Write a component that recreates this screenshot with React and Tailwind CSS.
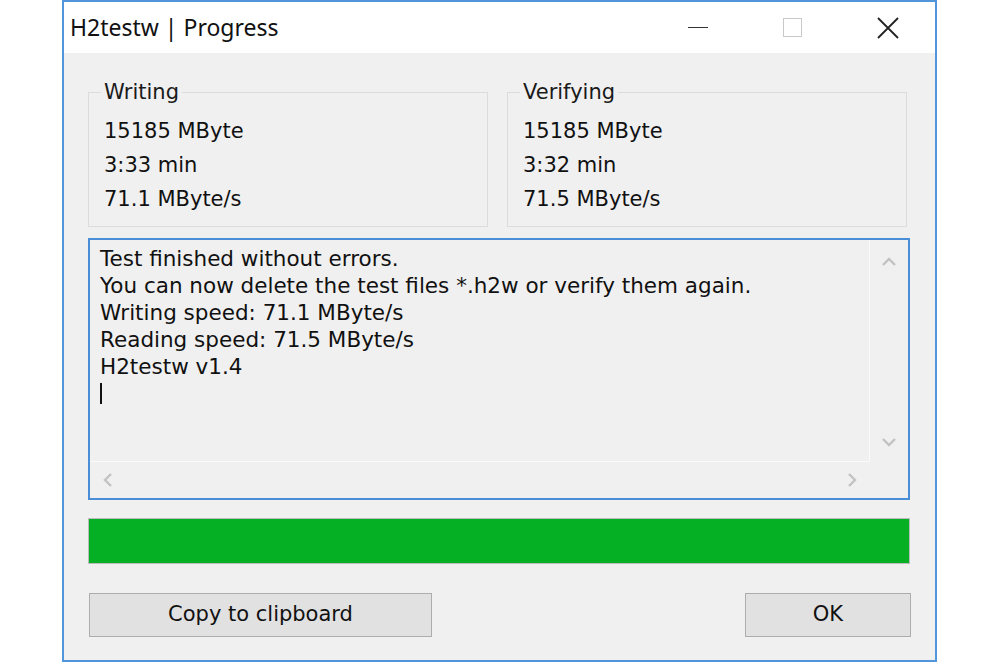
import React from 'react';

const dlgFont = { fontFamily: '"DejaVu Sans", Verdana, sans-serif' };

const Chevron = ({ dir }) => {
  const pts = {
    up: '2,9 8,3 14,9',
    down: '2,3 8,9 14,3',
    left: '9,2 3,8 9,14',
    right: '3,2 9,8 3,14',
  }[dir];
  const size = dir === 'up' || dir === 'down' ? { w: 16, h: 12 } : { w: 12, h: 16 };
  return (
    <svg width={size.w} height={size.h} viewBox={`0 0 ${size.w} ${size.h}`}>
      <polyline points={pts} fill="none" stroke="#c2c2c2" strokeWidth="2.4" />
    </svg>
  );
};

const GroupBox = ({ title, lines }) => (
  <div className="relative w-[400px] h-[135px] border border-[#dcdcdc]">
    <span className="absolute -top-[14px] left-[12px] px-[3px] bg-[#f0f0f0] leading-[26px] text-[21px] text-[#1a1a1a]">
      {title}
    </span>
    <div className="pt-[21px] pl-[15px] leading-[34px] text-[21px] text-[#111]">
      {lines.map((l) => (
        <div key={l}>{l}</div>
      ))}
    </div>
  </div>
);

const App = () => {
  const log = [
    'Test finished without errors.',
    'You can now delete the test files *.h2w or verify them again.',
    'Writing speed: 71.1 MByte/s',
    'Reading speed: 71.5 MByte/s',
    'H2testw v1.4',
  ];

  return (
    <div className="w-[1000px] h-[664px] bg-white pl-[62px]">
      <div className="w-[875px] h-[662px] border-2 border-[#5196da] flex flex-col bg-[#f0f0f0]">
        {/* Title bar */}
        <div className="h-[51px] bg-white flex items-center shrink-0">
          <div
            className="pl-[6px] text-[23px] text-[#111]"
            style={{ fontFamily: '"Noto Sans", "Open Sans", sans-serif' }}
          >
            H2testw | Progress
          </div>
          <div className="ml-auto flex h-full">
            <div className="w-[95px] h-full flex items-center justify-center">
              <div className="w-[20px] h-[1.5px] bg-[#333]" />
            </div>
            <div className="w-[95px] h-full flex items-center justify-center">
              <div className="w-[19px] h-[19px] border border-[#c9c9c9]" />
            </div>
            <div className="w-[95px] h-full flex items-center justify-center">
              <svg width="22" height="22" viewBox="0 0 22 22">
                <path d="M1 1 L21 21 M21 1 L1 21" stroke="#222" strokeWidth="1.8" />
              </svg>
            </div>
          </div>
        </div>

        {/* Body */}
        <div className="flex-1 pl-[24px] pr-[25px]" style={dlgFont}>
          <div className="mt-[39px] flex gap-[19px]">
            <GroupBox title="Writing" lines={['15185 MByte', '3:33 min', '71.1 MByte/s']} />
            <GroupBox title="Verifying" lines={['15185 MByte', '3:32 min', '71.5 MByte/s']} />
          </div>

          {/* Log box */}
          <div className="mt-[11px] h-[262px] border-2 border-[#4a8ed8] grid grid-cols-[1fr_38px] grid-rows-[1fr_36px]">
            <div className="border-r border-b border-[#fafafa] pl-[10px] pt-[5px] leading-[27px] text-[21.5px] text-[#111] overflow-hidden whitespace-nowrap">
              {log.map((l) => (
                <div key={l}>{l}</div>
              ))}
              <div className="h-[27px] flex items-center">
                <div className="w-[1.5px] h-[21px] bg-[#111]" />
              </div>
            </div>
            <div className="flex flex-col items-center justify-between pt-[16px] pb-[14px]">
              <Chevron dir="up" />
              <Chevron dir="down" />
            </div>
            <div className="flex items-center justify-between pl-[12px] pr-[12px]">
              <Chevron dir="left" />
              <Chevron dir="right" />
            </div>
            <div />
          </div>

          {/* Progress */}
          <div className="mt-[18px] h-[46px] border border-[#bcbcbc] bg-[#e6e6e6]">
            <div className="h-full w-full bg-[#06b025]" />
          </div>

          {/* Buttons */}
          <div className="mt-[29px] flex justify-between ml-px -mr-px">
            <button className="w-[343px] h-[44px] bg-[#e1e1e1] border border-[#adadad] text-[21px] text-[#111]">
              Copy to clipboard
            </button>
            <button className="w-[166px] h-[44px] bg-[#e1e1e1] border border-[#adadad] text-[21px] text-[#111]">
              OK
            </button>
          </div>
        </div>
      </div>
    </div>
  );
};

export default App;
